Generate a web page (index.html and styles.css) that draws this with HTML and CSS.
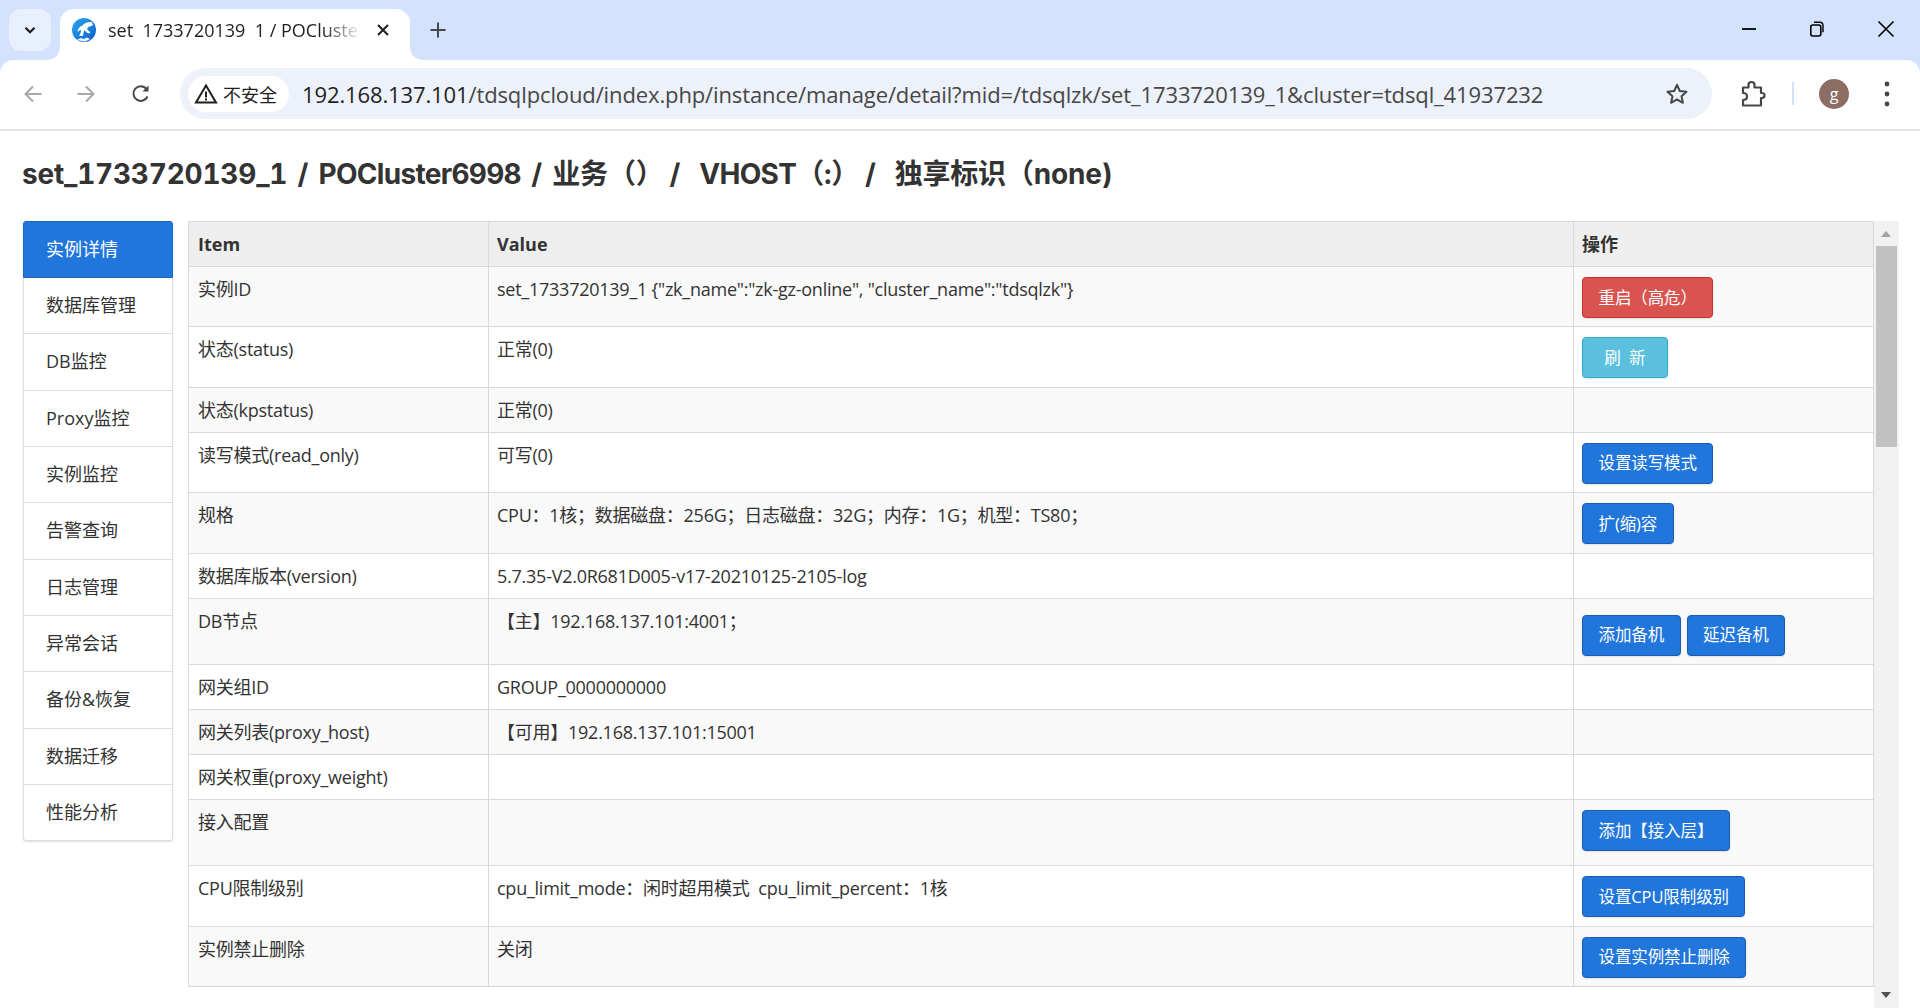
FILE: index.html
```html
<!DOCTYPE html>
<html lang="zh-CN">
<head>
<meta charset="utf-8">
<title>set_1733720139_1 / POCluster6998</title>
<link rel="stylesheet" href="styles.css">
</head>
<body>
<header class="browser">
  <div class="tabstrip">
    <button class="tab-search" aria-label="tabs">
      <svg width="16" height="16" viewBox="0 0 16 16"><path d="M3.500 5.800 8 10.200l4.500-4.400" fill="none" stroke="#1f1f1f" stroke-width="2.200"/></svg>
    </button>
    <div class="tab">
      <svg class="favicon" width="24" height="24" viewBox="0 0 24 24">
        <defs><linearGradient id="fav" x1="0" y1="0" x2="1" y2="1"><stop offset="0" stop-color="#2aa6f0"/><stop offset="1" stop-color="#0a5fcc"/></linearGradient></defs>
        <circle cx="12" cy="12" r="12" fill="url(#fav)"/>
        <path d="M7 18c1.500-2 2-4 2-6-1.500 0-2.500 1-3.500 2 0-3 2-5.500 5-6.500 2-2.500 5-4 9-3.500l1.500 2.500c-1 1.500-2.500 2-4 2l-2 2c.5 1.500 2 3 3.500 3.500l-1.500 1.500c-2-.5-3.500-2-4.500-3.500-1 2-1.500 4-1.500 6zM5 22l4-2 3 1 3-1.500 3 1.500-5 2.500z" fill="#fff"/>
      </svg>
      <span class="tab-title">set&nbsp; 1733720139&nbsp; 1 / POCluste</span>
      <svg class="tab-close" width="14" height="14" viewBox="0 0 14 14"><path d="M2 2l10 10M12 2 2 12" stroke="#1f1f1f" stroke-width="2"/></svg>
    </div>
    <svg class="new-tab" width="18" height="18" viewBox="0 0 18 18"><path d="M9 1.500v15M1.500 9h15" stroke="#474747" stroke-width="2"/></svg>
    <div class="window-controls">
      <svg width="16" height="16" viewBox="0 0 16 16"><path d="M1 8h14" stroke="#000" stroke-width="1.800"/></svg>
      <svg width="16" height="18" viewBox="0 0 16 18"><rect x="1.800" y="5" width="10" height="11" rx="2" fill="none" stroke="#000" stroke-width="1.600"/><path d="M5 2.200h6a3 3 0 0 1 3 3v7" fill="none" stroke="#000" stroke-width="1.400"/></svg>
      <svg width="18" height="18" viewBox="0 0 18 18"><path d="M1.500 1.500l15 15M16.500 1.500l-15 15" stroke="#000" stroke-width="1.600"/></svg>
    </div>
  </div>
  <div class="toolbar">
    <svg class="nav-icon back" width="20" height="20" viewBox="0 0 20 20"><path d="M18.500 10H2.500M10 2.500 2.500 10l7.500 7.500" fill="none" stroke="#a8a8a8" stroke-width="2"/></svg>
    <svg class="nav-icon forward" width="20" height="20" viewBox="0 0 20 20"><path d="M1.500 10h16M10 2.500l7.500 7.500-7.500 7.500" fill="none" stroke="#a8a8a8" stroke-width="2"/></svg>
    <svg class="nav-icon reload" width="20" height="20" viewBox="0 0 20 20"><path d="M16.500 12.500A7.300 7.300 0 1 1 15.500 5" fill="none" stroke="#474747" stroke-width="2"/><path d="M17.500 1.500v6h-6z" fill="#474747"/></svg>
    <div class="omnibox">
      <div class="security">
        <svg width="24" height="22" viewBox="0 0 24 22"><path d="M12 2.500 2 19.500h20z" fill="none" stroke="#1f1f1f" stroke-width="2"/><path d="M11 8.500h2v6h-2zM11 15.500h2v2h-2z" fill="#1f1f1f"/></svg>
        <span>不安全</span>
      </div>
      <div class="url"><span class="host">192.168.137.101</span>/tdsqlpcloud/index.php/instance/manage/detail?mid=/tdsqlzk/set_1733720139_1&amp;cluster=tdsql_41937232</div>
      <svg class="star" width="24" height="24" viewBox="0 0 24 24"><path d="M12 2.800l2.800 6.200 6.700.7-5 4.500 1.400 6.600-5.900-3.400-5.900 3.400 1.400-6.600-5-4.500 6.700-.7z" fill="none" stroke="#474747" stroke-width="2" stroke-linejoin="round"/></svg>
    </div>
    <svg class="ext" width="26" height="28" viewBox="0 0 26 28"><path d="M3 7.500h5.500V5a3 3 0 0 1 6 0v2.500H21v5.500h1a2.500 2.500 0 0 1 0 5h-1v7.500H3v-5.500c2.500 0 4-1.500 4-3.500s-1.500-3.500-4-3.500z" fill="none" stroke="#474747" stroke-width="2.200" stroke-linejoin="round"/></svg>
    <span class="divider"></span>
    <span class="avatar">g</span>
    <svg class="menu" width="8" height="28" viewBox="0 0 8 28"><circle cx="4" cy="4" r="2.400" fill="#474747"/><circle cx="4" cy="14" r="2.400" fill="#474747"/><circle cx="4" cy="24" r="2.400" fill="#474747"/></svg>
  </div>
</header>

<div class="page">
  <h1 class="title">set_1733720139_1 / <span class="tight">POCluster6998</span> / 业务（）<span class="sep">/</span><span class="tight">VHOST</span>（:）<span class="sep">/</span>独享标识（none)</h1>
  <div class="content">
    <nav class="side">
      <a class="side-item active">实例详情</a>
      <a class="side-item">数据库管理</a>
      <a class="side-item">DB监控</a>
      <a class="side-item">Proxy监控</a>
      <a class="side-item">实例监控</a>
      <a class="side-item">告警查询</a>
      <a class="side-item">日志管理</a>
      <a class="side-item">异常会话</a>
      <a class="side-item">备份&amp;恢复</a>
      <a class="side-item">数据迁移</a>
      <a class="side-item">性能分析</a>
    </nav>
    <table class="detail">
      <colgroup><col class="c1"><col class="c2"><col class="c3"></colgroup>
      <thead><tr><th>Item</th><th>Value</th><th>操作</th></tr></thead>
      <tbody>
        <tr><td>实例ID</td><td>set_1733720139_1 {"zk_name":"zk-gz-online", "cluster_name":"tdsqlzk"}</td><td class="ops"><button class="btn danger">重启（高危）</button></td></tr>
        <tr><td>状态(status)</td><td>正常(0)</td><td class="ops"><button class="btn info">&nbsp;刷&nbsp;&nbsp;新&nbsp;</button></td></tr>
        <tr><td>状态(kpstatus)</td><td>正常(0)</td><td></td></tr>
        <tr><td>读写模式(read_only)</td><td>可写(0)</td><td class="ops"><button class="btn">设置读写模式</button></td></tr>
        <tr><td>规格</td><td>CPU：1核；数据磁盘：256G；日志磁盘：32G；内存：1G；机型：TS80；</td><td class="ops"><button class="btn">扩(缩)容</button></td></tr>
        <tr><td>数据库版本(version)</td><td>5.7.35-V2.0R681D005-v17-20210125-2105-log</td><td></td></tr>
        <tr><td>DB节点</td><td>【主】192.168.137.101:4001；</td><td class="ops ops-low"><button class="btn">添加备机</button><button class="btn">延迟备机</button></td></tr>
        <tr><td>网关组ID</td><td>GROUP_0000000000</td><td></td></tr>
        <tr><td>网关列表(proxy_host)</td><td>【可用】192.168.137.101:15001</td><td></td></tr>
        <tr><td>网关权重(proxy_weight)</td><td></td><td></td></tr>
        <tr><td>接入配置</td><td></td><td class="ops ops-high"><button class="btn">添加【接入层】</button></td></tr>
        <tr><td>CPU限制级别</td><td>cpu_limit_mode：闲时超用模式 &nbsp;cpu_limit_percent：1核</td><td class="ops"><button class="btn">设置CPU限制级别</button></td></tr>
        <tr><td>实例禁止删除</td><td>关闭</td><td class="ops"><button class="btn">设置实例禁止删除</button></td></tr>
      </tbody>
    </table>
    <div class="scrollbar">
      <span class="arrow up"></span>
      <span class="thumb"></span>
      <span class="arrow down"></span>
    </div>
  </div>
</div>
</body>
</html>
```
FILE: styles.css
```css
* { box-sizing: border-box; }
html, body { margin: 0; height: 100%; overflow: hidden; background: #fff; }
body { font-family: "Open Sans", "Noto Sans CJK SC", sans-serif; color: #333; }

.browser { height: 131px; background: #d3e3fd; }
.tabstrip { height: 60px; display: flex; align-items: flex-start; padding: 9px 0 0 9px; }
.tab-search { width: 42px; height: 42px; border: 0; padding: 0; border-radius: 12px; background: #e9f0fd; display: flex; align-items: center; justify-content: center; }
.tab { position: relative; width: 350px; height: 51px; margin-left: 9px; background: #fff; border-radius: 14px 14px 0 0; display: flex; align-items: center; padding: 0 0 9px 12px; }
.tab::before, .tab::after { content: ""; position: absolute; bottom: 0; width: 12px; height: 12px; }
.tab::before { left: -12px; background: radial-gradient(circle at 0 0, #d3e3fd 11.500px, #fff 12px); }
.tab::after { right: -12px; background: radial-gradient(circle at 100% 0, #d3e3fd 11.500px, #fff 12px); }
.favicon { flex: none; }
.tab-title { width: 256px; margin-left: 12px; font-size: 18px; color: #1f1f1f; white-space: nowrap; -webkit-mask-image: linear-gradient(90deg, #000 84%, transparent 99%); mask-image: linear-gradient(90deg, #000 84%, transparent 99%); }
.tab-close { margin-left: 12px; flex: none; }
.new-tab { margin: 12px 0 0 19px; flex: none; }
.window-controls { margin-left: auto; width: 200px; height: 40px; display: flex; align-items: center; justify-content: space-between; padding: 0 25px 0 21px; }

.toolbar { height: 71px; background: #fff; border-radius: 14px 14px 0 0; border-bottom: 2px solid #e2e2e2; display: flex; align-items: center; padding: 0 0 2px 23px; }
.nav-icon { flex: none; }
.forward { margin-left: 33px; }
.reload { margin-left: 35px; }
.omnibox { width: 1532px; height: 51px; margin-left: 29px; border-radius: 26px; background: #ecf1fa; display: flex; align-items: center; padding: 0 23px 0 8px; }
.security { width: 101px; height: 36px; border-radius: 18px; background: #fff; display: flex; align-items: center; padding-left: 6px; gap: 5px; flex: none; font-size: 18px; color: #1f1f1f; font-family: "Noto Sans CJK SC", sans-serif; }
.url { margin-left: 13px; font-size: 22px; color: #474747; white-space: nowrap; flex: none; width: 1250px; letter-spacing: -0.12px; }
.host { color: #1f1f1f; }
.star { margin-left: auto; flex: none; }
.ext { margin-left: 28px; flex: none; }
.divider { width: 2px; height: 23px; margin-left: 26px; background: #d3e3fd; flex: none; }
.avatar { width: 30px; height: 30px; margin-left: 25px; border-radius: 50%; background: #8d6e63; color: #fff; font-size: 16px; display: flex; align-items: center; justify-content: center; flex: none; }
.menu { margin-left: 34px; flex: none; }

.page { height: 877px; overflow: hidden; }
.title { margin: 0; padding: 24px 0 0 22px; height: 90px; font-family: Inter, "Noto Sans CJK SC", sans-serif; font-feature-settings: "tnum"; font-size: 28px; letter-spacing: -0.2px; word-spacing: 3px; line-height: 38px; font-weight: 700; color: #333; white-space: nowrap; }
.tight { letter-spacing: -0.7px; }
.sep { margin: 0 19px 0 6px; }
.content { display: flex; align-items: flex-start; padding-left: 23px; }

.side { width: 150px; flex: none; border-radius: 3px; box-shadow: 0 1px 2px rgba(0,0,0,.12); }
.side-item { display: block; height: 56.330px; padding: 14px 0 0 22px; border: 1px solid #ddd; border-top: 0; font-size: 18px; line-height: 26px; color: #333; white-space: nowrap; }
.side-item.active { height: 57px; padding-top: 14px; background: #2176dc; border-color: #1c66c0; color: #fff; border-radius: 3px 3px 0 0; border-top: 1px solid #1c66c0; }
.side-item:last-child { border-radius: 0 0 3px 3px; }

.detail { width: 1685px; margin-left: 15px; flex: none; table-layout: fixed; border-collapse: collapse; font-size: 18px; letter-spacing: -0.25px; line-height: 24px; color: #333; }
.c1 { width: 300px; }
.c2 { width: 1085px; }
.c3 { width: 300px; }
.detail th, .detail td { border: 1px solid #d9d9d9; text-align: left; vertical-align: top; padding: 10px 8px 10px; }
.detail th { background: #eee; font-weight: 700; letter-spacing: 0; height: 45px; }
.detail th:first-child, .detail td:first-child { padding-left: 9px; }
.detail tbody tr:nth-child(odd) td { background: #f9f9f9; }
.detail td { height: 44.600px; }
.btn { display: inline-block; height: 41px; padding: 0 15.500px; margin: 0 6px 0 0; vertical-align: top; border: 1px solid #1a5db0; border-radius: 4px; background: #2176dc; color: #fff; font-family: inherit; font-size: 16.500px; letter-spacing: -0.1px; line-height: 38px; white-space: nowrap; box-shadow: 0 1px 2px rgba(0,0,0,.1); }
.btn.danger { background: #d9534f; border-color: #c9302c; }
.btn.info { padding: 0 17px; background: #5bc0de; border-color: #35a8cc; }
.ops { padding-bottom: 8.450px !important; }
.ops-low { padding-top: 16px !important; }
.ops-high { padding-bottom: 14px !important; }

.scrollbar { width: 25px; height: 790px; flex: none; position: relative; background: #f1f1f1; }
.thumb { position: absolute; top: 25px; left: 2px; width: 21px; height: 201px; background: #c1c1c1; }
.arrow { position: absolute; left: 7px; width: 0; height: 0; border-left: 5.500px solid transparent; border-right: 5.500px solid transparent; }
.arrow.up { top: 10px; border-bottom: 6px solid #a3a3a3; }
.arrow.down { top: 771px; border-top: 6px solid #505050; }
```
